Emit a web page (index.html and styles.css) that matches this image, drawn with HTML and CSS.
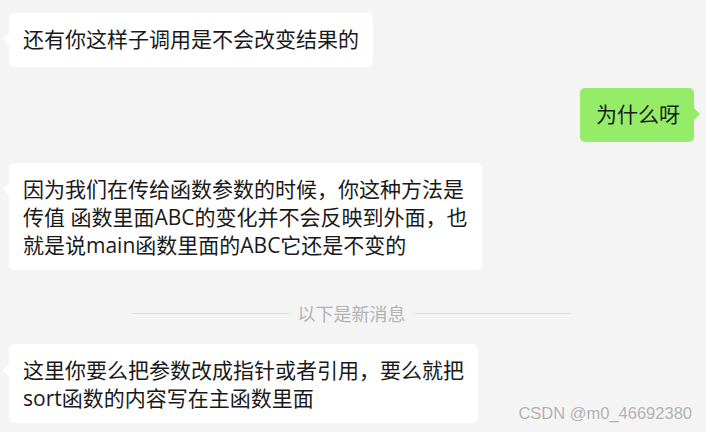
FILE: index.html
```html
<!DOCTYPE html>
<html lang="zh-CN">
<head>
  <meta charset="UTF-8">
  <title>聊天记录</title>
  <link rel="stylesheet" href="styles.css">
</head>
<body>
  <div class="chat">
    <div class="row left">
      <div class="bubble">还有你这样子调用是不会改变结果的</div>
    </div>
    <div class="row right">
      <div class="bubble mine">为什么呀</div>
    </div>
    <div class="row left">
      <div class="bubble">因为我们在传给函数参数的时候，你这种方法是<br>传值 函数里面ABC的变化并不会反映到外面，也<br>就是说main函数里面的ABC它还是不变的</div>
    </div>
    <div class="divider">
      <span class="line"></span>
      <span class="label">以下是新消息</span>
      <span class="line"></span>
    </div>
    <div class="row left">
      <div class="bubble">这里你要么把参数改成指针或者引用，要么就把<br>sort函数的内容写在主函数里面</div>
    </div>
  </div>
  <div class="watermark">CSDN @m0_46692380</div>
</body>
</html>
```

FILE: styles.css
```css
* {
  box-sizing: border-box;
}
html, body {
  height: 100%;
}
body {
  margin: 0;
  background: #f4f4f4;
  font-family: "Open Sans", "Noto Sans CJK SC", sans-serif;
  color: #191919;
  overflow: hidden;
  position: relative;
}

.chat {
  display: flex;
  flex-direction: column;
  gap: 21px;
  padding: 13px 12px 0 9px;
}

.row {
  display: flex;
}
.row.right {
  justify-content: flex-end;
}

.bubble {
  position: relative;
  background: #fff;
  border-radius: 5px;
  min-height: 54px;
  padding: 12px 14px 11px 14px;
  font-size: 21px;
  line-height: 28px;
  white-space: nowrap;
}
.bubble::before {
  content: "";
  position: absolute;
  top: 20px;
  left: -6px;
  border-top: 6px solid transparent;
  border-bottom: 6px solid transparent;
  border-right: 6px solid #fff;
}
.bubble.mine {
  background: #95ec69;
  padding-left: 16px;
  padding-right: 14px;
}
.bubble.mine::before {
  left: auto;
  right: -6px;
  border-right: none;
  border-left: 6px solid #95ec69;
}

.divider {
  display: flex;
  align-items: center;
  gap: 9px;
  width: 437px;
  margin: 10px 0 -2px 124px;
  font-family: "Noto Sans CJK SC", sans-serif;
  font-size: 18px;
  line-height: 24px;
  color: #b2b2b2;
}
.divider .line {
  flex: 1;
  height: 1px;
  background: #dcdcdc;
}

.watermark {
  position: absolute;
  right: 14px;
  bottom: 9px;
  font-family: "Liberation Sans", Arial, sans-serif;
  font-size: 16.5px;
  color: #b0b0b0;
  text-shadow: 0 0 2px #fff;
}
```
